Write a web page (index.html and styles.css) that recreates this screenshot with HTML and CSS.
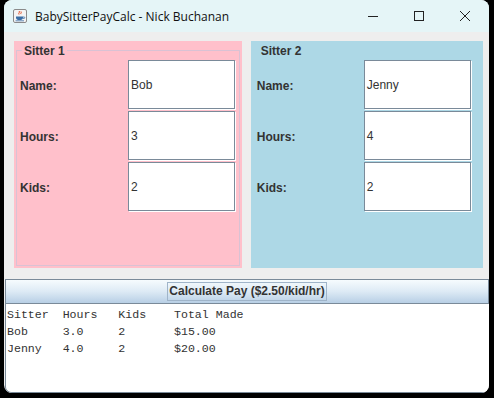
FILE: index.html
```html
<!DOCTYPE html>
<html lang="en">
<head>
    <meta charset="UTF-8">
    <title>BabySitterPayCalc - Nick Buchanan</title>
    <link rel="stylesheet" href="styles.css">
</head>
<body>
    <div class="window">
        <div class="titlebar">
            <svg class="app-icon" width="14" height="14" viewBox="0 0 14 14">
                <rect x="0.5" y="0.5" width="13" height="13" rx="1.5" fill="#f4f4f4" stroke="#8a8a8a"/>
                <path d="M6 2c1.5 1.2-1 2 0 3.5M8 2.5c1 1-0.8 1.6 0 2.6" stroke="#e0451b" stroke-width="1" fill="none"/>
                <path d="M3 7.5h7v1.2c0 1.4-1.3 2.3-3.5 2.3S3 10.1 3 8.7z" fill="#3a6ea5"/>
                <path d="M10 8h1.2c.8 0 .8 1.4 0 1.4H10" stroke="#3a6ea5" stroke-width=".8" fill="none"/>
                <path d="M2.5 11.8h8.5" stroke="#3a6ea5" stroke-width=".8"/>
            </svg>
            <span class="title">BabySitterPayCalc - Nick Buchanan</span>
            <div class="controls">
                <svg width="46" height="32" viewBox="0 0 46 32"><path d="M18 16.5h10" stroke="#222" stroke-width="1"/></svg>
                <svg width="46" height="32" viewBox="0 0 46 32"><rect x="18.5" y="11.5" width="9" height="9" fill="none" stroke="#222" stroke-width="1"/></svg>
                <svg width="46" height="32" viewBox="0 0 46 32"><path d="M18 11l10 10M28 11l-10 10" stroke="#222" stroke-width="1"/></svg>
            </div>
        </div>

        <div class="content">
            <div class="panels">
                <fieldset class="sitter pink">
                    <legend>Sitter 1</legend>
                    <div class="grid">
                        <label>Name:</label><div class="field">Bob</div>
                        <label>Hours:</label><div class="field">3</div>
                        <label>Kids:</label><div class="field">2</div>
                    </div>
                </fieldset>
                <fieldset class="sitter blue">
                    <legend>Sitter 2</legend>
                    <div class="grid">
                        <label>Name:</label><div class="field">Jenny</div>
                        <label>Hours:</label><div class="field">4</div>
                        <label>Kids:</label><div class="field">2</div>
                    </div>
                </fieldset>
            </div>

            <button class="calc"><span>Calculate Pay ($2.50/kid/hr)</span></button>

            <pre class="output">Sitter  Hours   Kids    Total Made
Bob     3.0     2       $15.00
Jenny   4.0     2       $20.00</pre>
        </div>
    </div>
</body>
</html>
```

FILE: styles.css
```css
body {
    margin: 0;
    background: #000;
    width: 494px;
    height: 398px;
    overflow: hidden;
}
.window {
    margin-left: 4px;
    width: 485px;
    height: 393px;
    border-radius: 8px;
    overflow: hidden;
    background: #eeeeee;
    display: flex;
    flex-direction: column;
}
.titlebar {
    height: 32px;
    background: #e5f5f7;
    display: flex;
    align-items: center;
    flex-shrink: 0;
}
.app-icon {
    margin-left: 9px;
    margin-right: 8px;
}
.title {
    font-family: "Open Sans", "Noto Sans", sans-serif;
    font-size: 12px;
    color: #111;
    flex: 1;
}
.controls {
    display: flex;
    margin-right: 1px;
}
.content {
    flex: 1;
    display: flex;
    flex-direction: column;
    padding-left: 1px;
}
.panels {
    display: flex;
    gap: 9px;
    padding: 9px 6px 11px 9px;
    height: 227px;
}
.sitter {
    flex: 1;
    margin: 0;
    padding: 0;
    border: none;
    position: relative;
    font-family: "Liberation Sans", Arial, sans-serif;
    font-size: 12px;
    font-weight: bold;
    color: #333;
}
.pink {
    background: #ffc0cb;
}
/* etched line of the titled border */
.pink::before {
    content: "";
    position: absolute;
    top: 9px;
    left: 2px;
    right: 2px;
    bottom: 2px;
    border: 1px solid #d9c2d4;
}
.blue {
    background: #add8e6;
    flex: 1.02;
}
.sitter legend {
    position: absolute;
    top: 3px;
    left: 8px;
    padding: 0 2px;
    z-index: 1;
}
.pink legend {
    background: #ffc0cb;
}
.blue legend {
    background: #add8e6;
}
.grid {
    position: relative;
    display: grid;
    grid-template-columns: 108px 107px;
    grid-auto-rows: 51px;
    padding: 19px 0 0 6px;
}
.blue .grid {
    grid-template-columns: 107px 107px;
}
.grid label {
    display: flex;
    align-items: center;
}
.field {
    background: #fff;
    border: 1px solid #7a8a99;
    box-shadow: inset -1px -1px 0 #fff, 1px 1px 0 #fff;
    margin-bottom: 2px;
    display: flex;
    align-items: center;
    padding-left: 2px;
    font-weight: normal;
    color: #333;
}
.calc {
    margin: 0;
    height: 25px;
    border: 1px solid #7a8a99;
    background: linear-gradient(#f6fbfe, #ddeaf5 50%, #b8cfe5);
    font-family: "Liberation Sans", Arial, sans-serif;
    font-size: 12px;
    font-weight: bold;
    color: #333;
    display: flex;
    justify-content: center;
    align-items: center;
    padding: 0;
}
.calc span {
    border: 1px solid #9fb4c9;
    padding: 1px 1px 2px 1px;
}
.output {
    margin: 0;
    flex: 1;
    background: #fff;
    border-left: 1px solid #7a8a99;
    border-bottom: 1px solid #7a8a99;
    border-radius: 0 0 0 6px;
    font-family: "Liberation Mono", "Courier New", monospace;
    font-size: 11.6px;
    line-height: 17px;
    color: #333;
    padding: 2px 0 0 1px;
}
```
